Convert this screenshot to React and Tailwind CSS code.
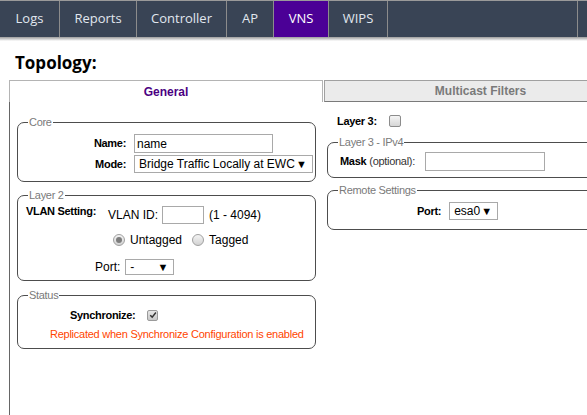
import React from 'react';

const tabs = [
    { label: 'Logs', w: 'w-[60px]' },
    { label: 'Reports', w: 'w-[77px]' },
    { label: 'Controller', w: 'w-[90px]' },
    { label: 'AP', w: 'w-[47px]' },
    { label: 'VNS', w: 'w-[55px]', active: true },
    { label: 'WIPS', w: 'w-[59px]' },
    { label: '', w: 'w-[190px]' },
];

function Group({ legend, className = '', children }) {
    return (
        <fieldset className={'border border-[#4d4d4d] rounded-[7px] ' + className}>
            <legend className="ml-[10px] px-[1px] text-[11px] leading-[13px] tracking-[-0.3px] text-[#7a7a7a]">
                {legend}
            </legend>
            {children}
        </fieldset>
    );
}

function Select({ value, className = '' }) {
    return (
        <div className={'flex items-center justify-between border border-[#a9a9a9] bg-white pl-[4px] pr-[5px] text-[12px] text-black ' + className}>
            <span>{value}</span>
            <span className="text-[11px] leading-none">▼</span>
        </div>
    );
}

function Radio({ checked }) {
    return (
        <span className="flex h-[12px] w-[12px] items-center justify-center rounded-full border border-[#a0a0a0] bg-gradient-to-b from-[#f4f4f4] to-[#d2d2d2]">
            {checked && <span className="h-[6px] w-[6px] rounded-full bg-[#7d7d7d]" />}
        </span>
    );
}

export default function App() {
    const bold = 'font-bold text-[11px] tracking-[-0.3px] text-black';

    return (
        <div className="relative h-[415px] w-[587px] overflow-hidden bg-white font-['Liberation_Sans',Arial,sans-serif]">
            {/* top menu */}
            <div className="flex h-[37px] border-t border-[#9a9a9a] bg-[#394455] font-['Open_Sans',sans-serif] text-[13px] text-[#e1e7ef]">
                {tabs.map((t, i) => (
                    <div
                        key={i}
                        className={'flex items-center justify-center border-r border-[#8c8c8c] ' + t.w + (t.active ? ' bg-[#4b0096] text-white' : '')}
                    >
                        {t.label}
                    </div>
                ))}
            </div>
            <div className="h-[4px] bg-gradient-to-b from-[#9c9c9c] to-white" />

            <h1 className="mt-[12px] pl-[15px] font-['Open_Sans',sans-serif] text-[17px] font-bold leading-[20px] text-black">
                Topology:
            </h1>

            {/* tab strip */}
            <div className="ml-[9px] mt-[7px] flex h-[22px] w-[640px]">
                <div className="flex w-[314px] items-center justify-center border-l border-r border-t border-[#b4b4b4] text-[12px] font-bold text-[#4b0082]">
                    General
                </div>
                <div className="ml-[1px] flex w-[313px] items-center justify-center border border-[#a0a0a0] border-b-[#7a7a7a] bg-[#ebebeb] text-[12px] font-bold text-[#7a7a7a]">
                    Multicast Filters
                </div>
            </div>

            <div className="ml-[9px] flex h-[320px] w-[640px]">
                {/* left column */}
                <div className="w-[313px] border-l border-[#666] pl-[7px] pt-[14px]">
                    <Group legend="Core" className="w-[299px] pb-[8px] pt-[5px]">
                        <div className="flex h-[19px] items-center">
                            <span className={'w-[108px] text-right ' + bold}>Name:</span>
                            <div className="ml-[8px] flex h-[19px] w-[139px] items-center border border-[#a9a9a9] pl-[2px] text-[12px]">name</div>
                        </div>
                        <div className="mt-[2px] flex h-[18px] items-center">
                            <span className={'w-[108px] text-right ' + bold}>Mode:</span>
                            <Select value="Bridge Traffic Locally at EWC" className="ml-[8px] h-[18px] w-[179px]" />
                        </div>
                    </Group>

                    <Group legend="Layer 2" className="mt-[7px] w-[299px] pb-[5px] pt-[4px]">
                        <div className="flex items-start">
                            <span className={'ml-[8px] mt-[-1px] w-[82px] leading-[13px] ' + bold}>VLAN Setting:</span>
                            <div className="flex items-center text-[12px] text-black">
                                <span>VLAN ID:</span>
                                <div className="ml-[4px] h-[18px] w-[42px] border border-[#a9a9a9]" />
                                <span className="ml-[5px]">(1 - 4094)</span>
                            </div>
                        </div>
                        <div className="ml-[95px] mt-[9px] flex h-[14px] items-center text-[12px] text-black">
                            <Radio checked />
                            <span className="ml-[5px]">Untagged</span>
                            <span className="ml-[10px]"><Radio /></span>
                            <span className="ml-[5px]">Tagged</span>
                        </div>
                        <div className="ml-[77px] mt-[12px] flex h-[16px] items-center text-[12px] text-black">
                            <span>Port:</span>
                            <Select value="-" className="ml-[5px] h-[16px] w-[49px]" />
                        </div>
                    </Group>

                    <Group legend="Status" className="mt-[8px] w-[299px] pb-[7px] pt-[7px]">
                        <div className="flex h-[12px] items-center">
                            <span className={'ml-[52px] ' + bold}>Synchronize:</span>
                            <span className="ml-[12px] flex h-[11px] w-[11px] items-center justify-center rounded-[2px] border border-[#9a9a9a] bg-gradient-to-b from-[#e6e6e6] to-[#c8c8c8]">
                                <svg viewBox="0 0 10 10" className="h-[8px] w-[8px]">
                                    <path d="M1.5 5.2 L4 7.6 L8.6 1.8" fill="none" stroke="#333" strokeWidth="1.8" />
                                </svg>
                            </span>
                        </div>
                        <div className="ml-[32px] mt-[7px] text-[11px] leading-[13px] tracking-[-0.25px] text-[#ff4500]">
                            Replicated when Synchronize Configuration is enabled
                        </div>
                    </Group>
                </div>

                {/* right column */}
                <div className="w-[320px] pl-[5px] pt-[13px]">
                    <div className="ml-[10px] flex h-[12px] items-center">
                        <span className={bold}>Layer 3:</span>
                        <span className="ml-[12px] h-[12px] w-[12px] rounded-[2px] border border-[#8c8c8c] bg-gradient-to-b from-[#f5f5f5] to-[#d6d6d6]" />
                    </div>

                    <Group legend="Layer 3 - IPv4" className="mt-[9px] w-[300px] pb-[6px] pt-[3px]">
                        <div className="flex h-[19px] items-center">
                            <span className={'ml-[12px] ' + bold}>Mask</span>
                            <span className="ml-[3px] text-[11px] tracking-[-0.3px] text-[#333]">(optional):</span>
                            <div className="ml-[10px] h-[19px] w-[120px] border border-[#a9a9a9]" />
                        </div>
                    </Group>

                    <Group legend="Remote Settings" className="mt-[6px] w-[300px] pb-[9px] pt-[5px]">
                        <div className="flex h-[18px] items-center">
                            <span className={'ml-[89px] ' + bold}>Port:</span>
                            <Select value="esa0" className="ml-[8px] h-[18px] w-[49px]" />
                        </div>
                    </Group>
                </div>
            </div>
        </div>
    );
}
